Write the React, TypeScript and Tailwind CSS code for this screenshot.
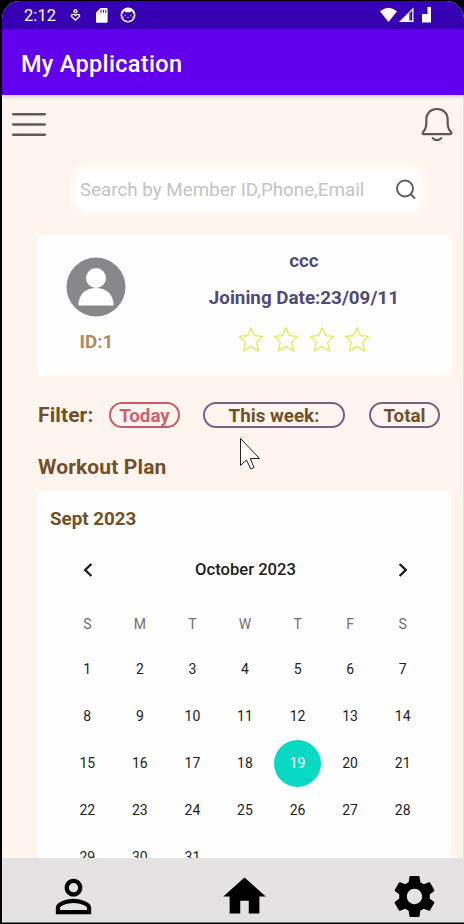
import React from "react";
import { MdHome, MdPersonOutline, MdSettings } from "react-icons/md";

const weekdays = ["S", "M", "T", "W", "T", "F", "S"];
const days = Array.from({ length: 31 }, (_, i) => i + 1);

function StatusBar() {
  return (
    <header className="flex h-[28px] shrink-0 items-center bg-[#3700b3] pl-[22px] pr-[32px] text-white">
      <span className="w-[46px] pt-[1px] text-[16.5px] leading-[28px] tracking-[0.1px]">2:12</span>
      <svg width="11" height="14" viewBox="0 0 12 14" fill="none" stroke="currentColor" strokeWidth="1.5">
        <circle cx="6" cy="2.8" r="1.6" />
        <path d="M6 12.6 L2 9 C.3 7.2 3.6 5 6 7.6 C8.4 5 11.7 7.2 10 9 Z" />
      </svg>
      <svg className="ml-[15px]" width="12" height="15" viewBox="0 0 12 15">
        <path d="M4.5 0H10.5Q11.6 0 11.6 1.2V13.6Q11.6 14.8 10.5 14.8H1.2Q0 14.8 0 13.6V4.6Z" fill="currentColor" />
        <path d="M5 1.8V4.7M7.4 1.8V4.7M9.8 1.8V4.7" stroke="#3700b3" strokeWidth="1" />
      </svg>
      <svg className="ml-[12px]" width="16" height="16" viewBox="0 0 16 16">
        <circle cx="8" cy="8" r="6.7" fill="none" stroke="currentColor" strokeWidth="1.5" />
        <path d="M2 5.6Q3 1.5 8 1.5T14 5.6L13 7 12 3.8 10.3 5.2H5.7L4 3.8 3 7Z" fill="currentColor" />
        <path d="M5.2 7.8V9.2M10.8 7.8V9.2M7.4 10.3H8.6M3 10H4M12 10H13" stroke="currentColor" strokeWidth=".8" />
      </svg>
      <div className="ml-auto flex items-center">
        <svg width="17" height="16" viewBox="0 0 17 16">
          <path d="M0 4.3Q8.5-2.7 17 4.3L8.5 15Z" fill="currentColor" />
        </svg>
        <svg className="ml-[2px]" width="15" height="16" viewBox="0 0 15 16">
          <path d="M0 15L14.5.6V15Z" fill="currentColor" />
          <path d="M10.4 6.4L13.2 3.5V13.6H10.4Z" fill="#3700b3" />
          <path d="M11.3 6.5V13.6" stroke="#7a55cc" strokeWidth=".7" />
        </svg>
        <svg className="ml-[7px]" width="11" height="16" viewBox="0 0 11 16">
          <path d="M1 7H6.5V0H10V15.6H1Z" fill="currentColor" />
        </svg>
      </div>
    </header>
  );
}

function MenuIcon() {
  return (
    <svg className="mt-[5px]" width="34" height="25" viewBox="0 0 34 25" stroke="#5e5b59" strokeWidth="2.4" strokeLinecap="round">
      <path d="M1.2 2.3H32.8M1.2 12.5H32.8M1.2 22.8H32.8" />
    </svg>
  );
}

function Bell() {
  return (
    <svg width="32" height="36" viewBox="0 0 32 36" fill="none" stroke="#5b5858" strokeWidth="2.2" strokeLinecap="round" strokeLinejoin="round">
      <path d="M16 2C9.5 2 5.3 6.3 5.3 12.5V16C5.3 20.3 4.7 22.3 2.4 24.4C1 26.2 1.5 27.2 3 27.2H29C30.5 27.2 31 26.2 29.6 24.4C27.3 22.3 26.7 20.3 26.7 16V12.5C26.7 6.3 22.5 2 16 2Z" />
      <path d="M11.8 31.2Q16 35 20.2 31.2" />
    </svg>
  );
}

function Star() {
  return (
    <svg width="26" height="27" viewBox="0 0 26 27" fill="none" stroke="#e5ec5c" strokeWidth="1.4">
      <path d="M13 2L16.5 9.5L24.5 10.5L18.7 16.3L20.5 24.9L13 20.6L5.5 24.9L7.3 16.3L1.5 10.5L9.5 9.5Z" />
    </svg>
  );
}

function MemberCard() {
  return (
    <section className="ml-[36px] mt-[26px] flex h-[141px] w-[414px] shrink-0 rounded-[3px] bg-[#fefefe]">
      <div className="flex w-[117px] flex-col items-center pt-[22px]">
        <svg width="60" height="60" viewBox="0 0 60 60">
          <circle cx="30" cy="30" r="29.5" fill="#88888b" />
          <circle cx="30" cy="21" r="10" fill="#fff" />
          <path d="M12.5 48.5V46.5C13.5 36 20.5 31 30 31S46.5 36 47.5 46.5V48.5Z" fill="#fff" />
        </svg>
        <span className="mt-[13px] text-[18.8px] font-bold leading-[24px] text-[#b48b58]">ID:1</span>
      </div>
      <div className="flex w-[298px] flex-col items-center pl-[1px] font-bold text-[#504a74]">
        <span className="mt-[14px] text-[18.8px] leading-[24px]">ccc</span>
        <span className="mt-[13px] text-[18.8px] leading-[24px]">Joining Date:23/09/11</span>
        <div className="mt-[16px] flex gap-[9.5px]">
          <Star />
          <Star />
          <Star />
          <Star />
        </div>
      </div>
    </section>
  );
}

function Filters() {
  return (
    <div className="ml-[36px] mt-[26px] flex h-[26px] shrink-0 items-center font-bold text-[#72502a]">
      <span className="w-[71px] text-[21px] leading-[26px] tracking-[0.1px]">Filter:</span>
      <button className="h-[26px] w-[71px] rounded-full border-2 border-[#c75d6b] text-[18.8px] leading-[24px] text-[#cb626f]">Today</button>
      <button className="ml-[23px] h-[26px] w-[142px] rounded-full border-2 border-[#716487] text-[18.8px] leading-[24px]">This week:</button>
      <button className="ml-[24px] h-[26px] w-[71px] rounded-full border-2 border-[#716487] text-[18.8px] leading-[24px]">Total</button>
    </div>
  );
}

function Calendar() {
  return (
    <section className="ml-[36px] mt-[10px] h-[440px] w-[413px] shrink-0 rounded-[3px] bg-[#fefefe]">
      <h3 className="pl-[12px] pt-[16px] text-[18.8px] font-bold leading-[24px] text-[#6f5125]">Sept 2023</h3>
      <div className="mt-[24px] flex h-[30px] items-center justify-between pl-[45px] pr-[43px] text-[#1d1d1d]">
        <svg width="10" height="14" viewBox="0 0 10 14" fill="none" stroke="currentColor" strokeWidth="2.4">
          <path d="M8.4 1L2.2 7L8.4 13" />
        </svg>
        <span className="text-[16.6px] font-medium">October 2023</span>
        <svg width="10" height="14" viewBox="0 0 10 14" fill="none" stroke="currentColor" strokeWidth="2.4">
          <path d="M1.6 1L7.8 7L1.6 13" />
        </svg>
      </div>
      <div className="ml-[23px] mt-[16px] grid w-[368px] grid-cols-7 text-center text-[14px] text-[#707070]">
        {weekdays.map((d, i) => (
          <span key={i} className="leading-[47px]">{d}</span>
        ))}
      </div>
      <div className="-mt-[2px] ml-[23px] grid w-[368px] grid-cols-7 justify-items-center text-[14px] text-[#222]">
        {days.map((d) => (
          <span
            key={d}
            className={
              d === 19
                ? "size-[47px] rounded-full bg-[#07d9c5] text-center leading-[47px] text-white"
                : "size-[47px] text-center leading-[47px]"
            }
          >
            {d}
          </span>
        ))}
      </div>
    </section>
  );
}

export default function App() {
  return (
    <div className="relative h-[924px] w-[464px] overflow-hidden bg-black pl-[2px] pt-px font-['Roboto',sans-serif]">
      <div className="flex h-[922px] w-[462px] flex-col overflow-hidden rounded-t-[18px] border-b border-[#77757a] bg-[#fff5ef]">
        <StatusBar />
        <div className="z-10 flex h-[66px] shrink-0 items-center bg-[#6200ee] pl-[19px] pt-[5px] text-[23.5px] font-medium tracking-[0.32px] text-white shadow-[0_1px_4px_rgba(0,0,0,0.25)]">
          My Application
        </div>
        <main className="flex min-h-0 flex-1 flex-col overflow-hidden border-r border-[#e8dfdc]">
          <div className="flex shrink-0 items-start justify-between pl-[10px] pr-[10px] pt-[12px]">
            <MenuIcon />
            <Bell />
          </div>
          <div className="ml-[76px] mt-[28px] flex h-[38px] w-[341px] shrink-0 items-center justify-between rounded-[6px] bg-white pl-[2px] pr-[2px] shadow-[0_0_7px_4px_#fff]">
            <span className="text-[18.8px] text-[#c5c3c3]">Search by Member ID,Phone,Email</span>
            <svg width="22" height="22" viewBox="0 0 22 22" fill="none" stroke="#605e5e" strokeWidth="2">
              <circle cx="10" cy="9.5" r="8" />
              <path d="M15.5 15L20 19.5" />
            </svg>
          </div>
          <MemberCard />
          <Filters />
          <h2 className="ml-[36px] mt-[25px] shrink-0 text-[21px] font-bold leading-[28px] tracking-[0.13px] text-[#72502a]">Workout Plan</h2>
          <Calendar />
        </main>
        <nav className="flex h-[64px] shrink-0 items-start justify-between bg-[#e4e2e3] pl-[45px] pr-[24px] pt-[13px] text-black">
          <MdPersonOutline className="-mt-[1px] size-[53px]" />
          <MdHome className="size-[51px]" />
          <MdSettings className="size-[51px]" />
        </nav>
      </div>
      <svg className="absolute left-[239px] top-[437px]" width="23" height="34" viewBox="0 0 23 34">
        <path d="M1.5 1.5V28.5L7.5 23L11.8 32L15 30.5L11.3 21.5H20.5Z" fill="#fff" stroke="#222" strokeWidth="1" />
      </svg>
    </div>
  );
}
